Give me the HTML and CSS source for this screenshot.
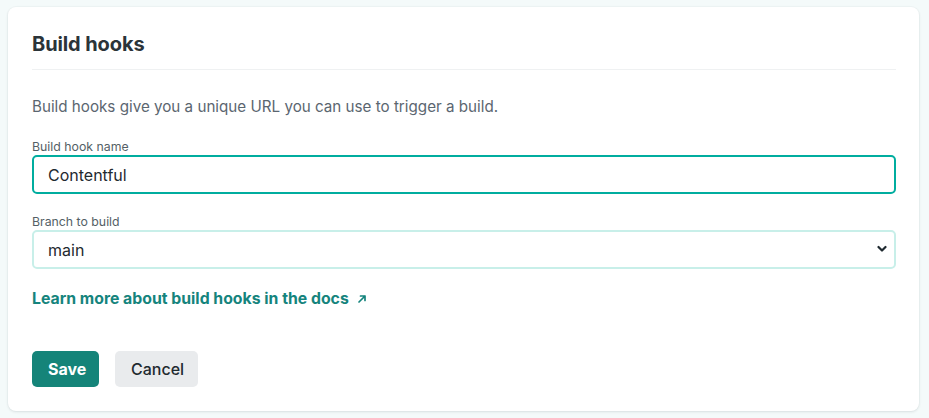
FILE: index.html
```html
<!DOCTYPE html>
<html lang="en">
<head>
<meta charset="utf-8">
<title>Build hooks</title>
<link rel="stylesheet" href="styles.css">
</head>
<body>
<section class="card">
  <header class="card-header">
    <h2 class="card-title">Build hooks</h2>
  </header>
  <p class="description">Build hooks give you a unique URL you can use to trigger a build.</p>
  <form class="form">
    <div class="field">
      <label class="label" for="hook-name">Build hook name</label>
      <input class="input input-focus" id="hook-name" type="text" value="Contentful">
    </div>
    <div class="field">
      <label class="label" for="branch">Branch to build</label>
      <div class="select-wrap">
        <select class="input select" id="branch">
          <option>main</option>
        </select>
        <svg class="chevron" width="10" height="8" viewBox="0 0 10 8" aria-hidden="true"><path d="M1.5 2 L5 5.5 L8.5 2" fill="none" stroke="#1f2a30" stroke-width="2.2" stroke-linecap="round" stroke-linejoin="round"/></svg>
      </div>
    </div>
    <a class="docs-link" href="#">Learn more about build hooks in the docs<svg class="arrow" width="10" height="10" viewBox="0 0 10 10" aria-hidden="true"><path d="M2 8 L8 2 M3.5 2 H8 V6.5" fill="none" stroke="#15847d" stroke-width="1.7" stroke-linecap="round" stroke-linejoin="round"/></svg></a>
    <div class="actions">
      <button type="button" class="btn btn-primary">Save</button>
      <button type="button" class="btn btn-secondary">Cancel</button>
    </div>
  </form>
</section>
</body>
</html>
```

FILE: styles.css
```css
* { box-sizing: border-box; }
html, body { margin: 0; padding: 0; }
body {
  background: #f4fafa;
  font-family: Inter, "Liberation Sans", Arial, sans-serif;
  color: #1f2a30;
  padding: 7px 10px 7px 8px;
}
.card {
  background: #ffffff;
  border-radius: 8px;
  box-shadow: 0 1px 3px rgba(14, 30, 37, 0.10), 0 0 0 1px rgba(14, 30, 37, 0.02);
  padding: 0 23px 24px 24px;
  height: 404px;
}
.card-header {
  padding-top: 25px;
  padding-bottom: 13px;
  border-bottom: 1px solid #eff1f2;
}
.card-title {
  margin: 0;
  font-size: 20px;
  line-height: 24px;
  font-weight: 700;
  color: #2b3439;
  letter-spacing: -0.1px;
}
.description {
  margin: 26px 0 0;
  font-size: 15.2px;
  line-height: 22px;
  color: #5b6670;
}
.form {
  display: flex;
  flex-direction: column;
  margin-top: 21px;
}
.field {
  display: flex;
  flex-direction: column;
}
.field + .field { margin-top: 20px; }
.label {
  font-size: 12.3px;
  line-height: 16px;
  color: #545f66;
  margin-bottom: 0;
}
.input {
  width: 100%;
  height: 39px;
  border: 2px solid #c8efe9;
  border-radius: 5px;
  padding: 0 14px;
  font-family: inherit;
  font-size: 16px;
  color: #1f2a30;
  background: #ffffff;
  outline: none;
}
.input-focus { border-color: #00ad9f; }
.select-wrap { position: relative; }
.select {
  appearance: none;
  -webkit-appearance: none;
  height: 39px;
}
.chevron {
  position: absolute;
  right: 9px;
  top: 15px;
}
.docs-link {
  margin-top: 20px;
  align-self: flex-start;
  font-size: 15.8px;
  line-height: 20px;
  font-weight: 700;
  color: #15847d;
  text-decoration: none;
  display: inline-flex;
  align-items: center;
  gap: 8px;
}
.arrow { flex: none; }
.actions {
  display: flex;
  gap: 16px;
  margin-top: 42px;
}
.btn {
  height: 36px;
  border: none;
  border-radius: 5px;
  font-family: inherit;
  font-size: 16px;
  padding: 0 16px;
}
.btn-primary {
  background: #158479;
  color: #ffffff;
  font-weight: 700;
  width: 67px;
}
.btn-secondary {
  background: #e9ebed;
  color: #1f2a30;
  font-weight: 500;
  width: 83px;
}
```
